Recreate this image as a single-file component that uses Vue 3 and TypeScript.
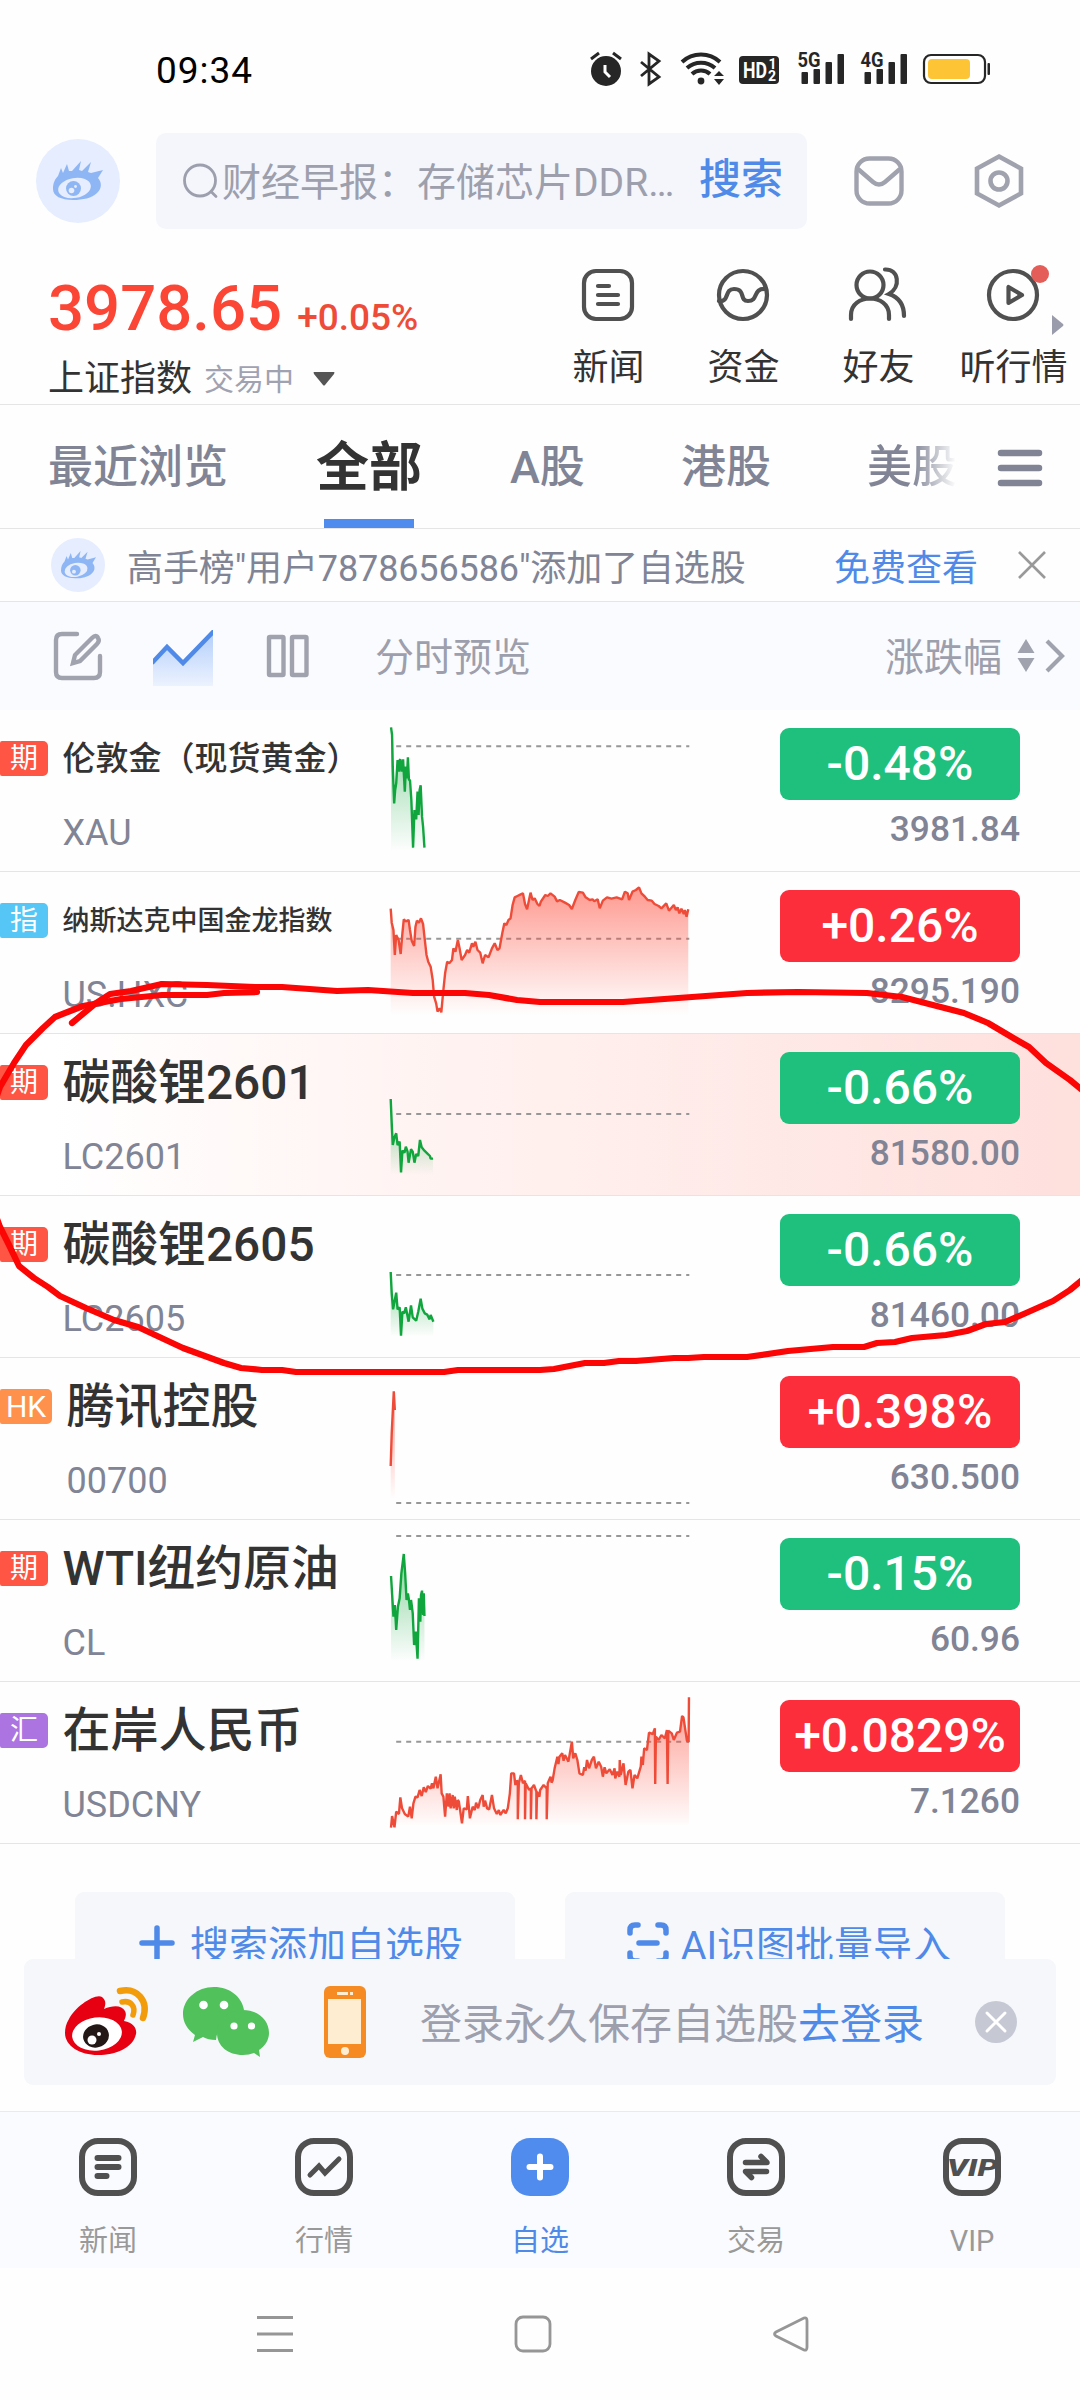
<script setup lang="ts">
interface Quote {
  tag: string
  tagColor: string
  name: string
  size: number
  code: string
  change: string
  price: string
  up: boolean
  hot?: boolean
  top: number
  base: number
  floor: number
  line: string
}

const quotes: Quote[] = [
  {
    tag: '期', tagColor: '#fe5544', name: '伦敦金（现货黄金）', size: 33, code: 'XAU',
    change: '-0.48%', price: '3981.84', up: false, top: 30, base: 139, floor: 455,
    line: '1135,82 1138,105 1140,200 1144,310 1147,270 1150,250 1154,180 1158,215 1160,180 1162,178 1166,215 1170,178 1175,275 1178,200 1181,235 1184,172 1187,240 1190,240 1194,300 1199,443 1203,330 1208,358 1212,275 1215,345 1218,270 1221,256 1225,350 1228,380 1232,443',
  },
  {
    tag: '指', tagColor: '#55c6f6', name: '纳斯达克中国金龙指数', size: 27, code: 'US.HXC',
    change: '+0.26%', price: '8295.190', up: true, top: 516, base: 716, floor: 945,
    line: '1134,626 1137,668 1142,690 1146,765 1150,705 1157,720 1163,762 1168,700 1172,658 1178,664 1186,660 1190,690 1195,722 1202,738 1206,680 1210,662 1216,668 1222,655 1228,672 1232,710 1238,765 1243,785 1250,800 1256,840 1260,890 1266,910 1270,935 1276,925 1281,937 1286,880 1292,820 1298,785 1304,790 1312,780 1316,745 1322,755 1329,720 1334,745 1340,780 1350,765 1356,750 1362,758 1370,730 1374,740 1380,725 1386,750 1394,758 1401,790 1408,765 1418,772 1428,745 1436,730 1444,750 1450,745 1458,700 1464,670 1470,675 1476,660 1482,655 1488,615 1494,592 1502,588 1510,584 1518,580 1524,612 1530,628 1540,578 1546,600 1552,595 1560,612 1566,618 1570,605 1583,585 1590,588 1598,580 1610,590 1617,604 1625,600 1640,608 1652,615 1660,627 1670,600 1680,576 1692,578 1700,592 1712,600 1720,598 1725,604 1735,598 1741,625 1750,602 1762,592 1775,596 1790,592 1806,598 1814,575 1822,580 1826,600 1836,575 1846,570 1855,562 1862,580 1872,590 1880,600 1892,602 1900,612 1912,618 1920,625 1934,610 1942,632 1956,615 1962,630 1967,622 1972,640 1978,626 1985,642 1988,630 1993,650 1998,628',
  },
  {
    tag: '期', tagColor: '#fe5544', name: '碳酸锂2601', size: 47.8, code: 'LC2601',
    change: '-0.66%', price: '81580.00', up: false, hot: true, top: 12, base: 252, floor: 435,
    line: '1134,207 1137,280 1140,345 1145,322 1150,310 1154,345 1160,335 1164,427 1168,362 1174,368 1178,350 1183,365 1186,398 1193,358 1198,365 1203,398 1208,372 1214,378 1219,330 1224,352 1232,362 1240,370 1248,378 1250,386 1257,386',
  },
  {
    tag: '期', tagColor: '#fe5544', name: '碳酸锂2605', size: 47.8, code: 'LC2605',
    change: '-0.66%', price: '81460.00', up: false, top: 498, base: 735, floor: 920,
    line: '1134,726 1137,790 1141,838 1150,788 1154,838 1160,832 1164,917 1168,845 1173,850 1178,832 1186,875 1193,826 1198,862 1208,872 1214,845 1221,806 1226,836 1233,850 1240,854 1247,868 1250,855 1258,875',
  },
  {
    tag: 'HK', tagColor: '#ff914d', name: '腾讯控股', size: 48, code: '00700',
    change: '+0.398%', price: '630.500', up: true, top: -6, base: 429, floor: 415,
    line: '1134,318 1137,220 1143,94 1146,150',
  },
  {
    tag: '期', tagColor: '#fe5544', name: 'WTI纽约原油', size: 47.8, code: 'CL',
    change: '-0.15%', price: '60.96', up: false, top: 480, base: 528, floor: 905,
    line: '1135,648 1138,700 1142,770 1146,735 1150,810 1155,740 1160,715 1165,640 1172,582 1176,640 1180,720 1184,700 1187,720 1190,750 1193,720 1195,735 1198,760 1202,855 1207,815 1209,850 1212,896 1216,715 1220,785 1222,705 1225,692 1228,765 1230,700 1232,768',
  },
  {
    tag: '汇', tagColor: '#ab74e0', name: '在岸人民币', size: 48, code: 'USDCNY',
    change: '+0.0829%', price: '7.1260', up: true, top: 966, base: 1145, floor: 1395,
    line: '1135,1403 1138,1368 1145,1402 1150,1355 1158,1362 1162,1312 1167,1345 1175,1362 1185,1370 1190,1340 1195,1375 1200,1330 1206,1310 1212,1312 1218,1290 1224,1308 1230,1282 1236,1296 1242,1278 1250,1286 1254,1270 1258,1285 1265,1250 1270,1285 1279,1243 1282,1300 1287,1310 1292,1370 1297,1300 1302,1340 1305,1300 1308,1345 1314,1305 1317,1345 1320,1310 1326,1350 1329,1320 1332,1325 1341,1390 1346,1345 1355,1348 1358,1308 1364,1375 1372,1340 1378,1350 1382,1328 1388,1345 1394,1320 1401,1305 1404,1340 1408,1322 1414,1345 1420,1348 1428,1305 1434,1345 1442,1362 1448,1350 1452,1365 1462,1350 1468,1360 1474,1345 1480,1300 1484,1240 1492,1240 1496,1275 1500,1262 1503,1265 1503,1378 1506,1270 1512,1245 1518,1270 1524,1262 1524,1378 1526,1270 1536,1290 1541,1285 1541,1378 1543,1285 1550,1275 1557,1295 1557,1378 1559,1295 1566,1310 1568,1290 1578,1275 1587,1285 1587,1378 1590,1270 1598,1250 1601,1268 1604,1262 1610,1225 1618,1190 1621,1212 1624,1190 1632,1180 1636,1202 1640,1185 1650,1205 1660,1145 1664,1195 1670,1180 1676,1200 1682,1240 1692,1245 1696,1222 1700,1232 1704,1200 1710,1225 1718,1200 1724,1190 1730,1225 1738,1205 1745,1220 1750,1250 1755,1222 1760,1240 1770,1228 1778,1245 1784,1225 1786,1255 1792,1235 1798,1250 1799,1200 1802,1245 1810,1210 1816,1275 1824,1235 1830,1230 1836,1285 1842,1245 1850,1255 1860,1220 1862,1190 1866,1215 1870,1165 1878,1170 1884,1118 1895,1122 1901,1105 1902,1272 1904,1130 1912,1140 1920,1125 1930,1135 1936,1110 1938,1272 1940,1112 1950,1120 1956,1140 1965,1118 1974,1115 1980,1068 1984,1072 1988,1100 1994,1142 1999,1145 2000,1012',
  },
]

const area = (q: Quote): string => {
  const pts = q.line.split(' ')
  const first = pts[0].split(',')[0]
  const last = pts[pts.length - 1].split(',')[0]
  return `${first},${q.floor} ${q.line} ${last},${q.floor}`
}
</script>

<template>
  <div class="screen">
    <header class="status">
      <span class="clock">09:34</span>
      <svg class="status-icons" viewBox="588 48 406 40" width="406" height="40">
        <g fill="#262626">
          <circle cx="606" cy="71" r="15" />
          <path d="M591 59l8-6M621 59l-8-6" stroke="#262626" stroke-width="3" />
          <path d="M605 65v7l5 5" fill="none" stroke="#fff" stroke-width="3" />
          <path d="M641 62l18 15-10 7V54l10 7-18 15" fill="none" stroke="#262626" stroke-width="2.8" />
          <path d="M682 62a28 28 0 0 1 38 0M687 68a21 21 0 0 1 28 0M692 74a13 13 0 0 1 18 0" fill="none" stroke="#262626" stroke-width="4" />
          <circle cx="701" cy="81" r="3.4" />
          <path d="M714 76l5-5 5 5zM714 79h10l-5 6z" />
          <rect x="739" y="56" width="40" height="28" rx="4" />
          <rect x="801.500" y="72" width="6.500" height="12" rx="1" /><rect x="813.500" y="69" width="6.500" height="15" rx="1" />
          <rect x="825.500" y="62" width="6.500" height="22" rx="1" /><rect x="837.500" y="54" width="6.500" height="30" rx="1" />
          <rect x="864.500" y="72" width="6.500" height="12" rx="1" /><rect x="876.500" y="69" width="6.500" height="15" rx="1" />
          <rect x="888.500" y="62" width="6.500" height="22" rx="1" /><rect x="900.500" y="54" width="6.500" height="30" rx="1" />
          <rect x="987.500" y="63" width="2.500" height="12" rx="1" />
        </g>
        <rect x="924" y="55" width="61" height="28" rx="7" fill="#fff" stroke="#262626" stroke-width="2.200" />
        <rect x="928" y="59" width="42" height="20" rx="4" fill="#fdc536" />
        <g font-family="Roboto, sans-serif" font-weight="700">
          <text x="743" y="77.500" font-size="22" textLength="24" lengthAdjust="spacingAndGlyphs" fill="#fff">HD</text>
          <text x="768.500" y="69" font-size="14" fill="#fff">1</text>
          <text x="768" y="81" font-size="14" fill="#fff">2</text>
          <text x="797.500" y="66.500" font-size="20" textLength="23" lengthAdjust="spacingAndGlyphs" fill="#262626">5G</text>
          <text x="860.500" y="66.500" font-size="20" textLength="23" lengthAdjust="spacingAndGlyphs" fill="#262626">4G</text>
        </g>
      </svg>
    </header>

    <div class="search-row">
      <div class="avatar">
        <svg viewBox="0 0 50 40" width="50" height="40">
          <path d="M0 28C0 22 2 18 5 15L8 7 10 12 14 3 16 10 19 10 28 0 26 9 29 10 38 1 35 11 38 12 50 9 45 17C49 21 49 28 44 32C39 37 30 39 20 39C8 39 0 35 0 28z" fill="#8fb6f4" />
          <ellipse cx="21.500" cy="27" rx="16.500" ry="10" transform="rotate(-10 21.500 27)" fill="#e5edfe" />
          <ellipse cx="20.500" cy="27.500" rx="7.500" ry="7.500" fill="#8fb6f4" />
          <circle cx="18.500" cy="29.500" r="2.800" fill="#e5edfe" /><circle cx="22.500" cy="25.500" r="1.400" fill="#e5edfe" />
        </svg>
      </div>
      <div class="search">
        <svg viewBox="0 0 38 38" width="38" height="38" fill="none" stroke="#9d9fad" stroke-width="2.800" stroke-linecap="round">
          <circle cx="18" cy="18.500" r="15.500" /><path d="M29 29.500l5 5" />
        </svg>
        <span class="query">财经早报：存储芯片DDR…</span>
        <span class="go">搜索</span>
      </div>
      <svg class="mail" viewBox="0 0 50 50" width="50" height="50" fill="none" stroke="#a0a2ae" stroke-width="4.400">
        <rect x="2.500" y="2.500" width="45" height="45" rx="13" />
        <path d="M4 13l15 13q6 5 12 0L46 13" />
      </svg>
      <svg class="gear" viewBox="0 0 50 56" width="50" height="56" fill="none" stroke="#a0a2ae" stroke-width="4.600">
        <path d="M25 3.500L47 15.500V40.500L25 52.500 3 40.500V15.500z" /><circle cx="25" cy="28" r="8.500" />
      </svg>
    </div>

    <section class="index-row">
      <div class="index">
        <div class="index-value"><b>3978.65</b><em>+0.05%</em></div>
        <div class="index-name">
          <span>上证指数</span><small>交易中</small>
          <svg viewBox="0 0 22 14" width="22" height="14"><path d="M1 0h20q1 0 0 2L12 13q-1 1-2 0L1 2q-1-2 0-2z" fill="#555" /></svg>
        </div>
      </div>
      <nav class="shortcuts">
        <div class="shortcut">
          <svg viewBox="0 0 60 60" width="60" height="60">
            <rect x="6" y="6" width="48" height="48" rx="12" /><path d="M20 21h11M20 30h20M20 39h20" />
          </svg>
          <span>新闻</span>
        </div>
        <div class="shortcut">
          <svg viewBox="0 0 60 60" width="60" height="60">
            <circle cx="30" cy="30" r="24" /><path d="M6 36c11 1 5-12 15-12 12 0 5 12 14 12 11 0 4-13 18-12" />
          </svg>
          <span>资金</span>
        </div>
        <div class="shortcut">
          <svg viewBox="1 0 60 60" width="60" height="60">
            <circle cx="23" cy="20" r="13.500" /><path d="M4 54V50C4 28 42 28 42 50v4M38 4.500C52 4 54 22 42 29 51 32 57 39 57 51" />
          </svg>
          <span>好友</span>
        </div>
        <div class="shortcut">
          <svg viewBox="0 0 60 60" width="60" height="60">
            <circle cx="30" cy="30" r="24" /><path d="M25.500 22v16L39 30z" stroke-linejoin="round" />
          </svg>
          <i class="dot"></i>
          <span>听行情</span>
        </div>
        <svg class="more" viewBox="0 0 13 22" width="13" height="22"><path d="M1 1l11 9q1 1 0 2L1 21z" fill="#9a9cac" /></svg>
      </nav>
    </section>

    <nav class="tabs">
      <span class="tab t1">最近浏览</span>
      <span class="tab t2">全部</span>
      <span class="tab t3">A股</span>
      <span class="tab t4">港股</span>
      <span class="tab t5">美股</span>
      <svg class="menu" viewBox="0 0 46 36" width="46" height="36" stroke="#808495" stroke-width="6.500" stroke-linecap="round"><path d="M4 3h38M4 18h38M4 33h38" /></svg>
    </nav>

    <section class="notice">
      <div class="avatar small">
        <svg viewBox="0 0 50 40" width="35" height="28">
          <path d="M0 28C0 22 2 18 5 15L8 7 10 12 14 3 16 10 19 10 28 0 26 9 29 10 38 1 35 11 38 12 50 9 45 17C49 21 49 28 44 32C39 37 30 39 20 39C8 39 0 35 0 28z" fill="#8fb6f4" />
          <ellipse cx="21.500" cy="27" rx="16.500" ry="10" transform="rotate(-10 21.500 27)" fill="#e5edfe" />
          <ellipse cx="20.500" cy="27.500" rx="7.500" ry="7.500" fill="#8fb6f4" />
          <circle cx="18.500" cy="29.500" r="2.800" fill="#e5edfe" />
        </svg>
      </div>
      <span class="notice-text">高手榜"用户7878656586"添加了自选股</span>
      <span class="link">免费查看</span>
      <svg viewBox="0 0 28 28" width="28" height="28" stroke="#999" stroke-width="2.600"><path d="M1 1l26 26M27 1L1 27" /></svg>
    </section>

    <section class="tools">
      <svg class="tool-edit" viewBox="0 0 50 50" width="50" height="50" fill="none" stroke="#a0a2ae" stroke-width="4.400" stroke-linecap="round">
        <path d="M24 3H9q-6 0-6 6v32q0 6 6 6h32q6 0 6-6V25" /><path d="M39 7q4-4 6 0 2 3-1 6L27 30l-7 2 2-8z" />
      </svg>
      <svg class="tool-line" viewBox="0 0 60 56" width="60" height="56">
        <defs><linearGradient id="toolFill" x1="0" y1="0" x2="0" y2="1"><stop offset="0" stop-color="#b3cffb" /><stop offset="1" stop-color="#ecf2fe" /></linearGradient></defs>
        <path d="M0 32L14 17 30 33 60 2V56H0z" fill="url(#toolFill)" /><path d="M-1 33L14 17 30 33 61 1" fill="none" stroke="#4f8ae8" stroke-width="4.400" />
      </svg>
      <svg class="tool-cols" viewBox="0 0 44 44" width="44" height="44" fill="none" stroke="#a0a2ae" stroke-width="4.400">
        <rect x="3" y="3" width="14.500" height="38" rx="1" /><rect x="26" y="3" width="14.500" height="38" rx="1" />
      </svg>
      <span class="preview">分时预览</span>
      <span class="sort">涨跌幅</span>
      <svg viewBox="0 0 48 36" width="48" height="36">
        <path d="M8 1l8.500 14h-17zM8 34l8.500-14h-17z" fill="#a0a2ae" /><path d="M29 3l15 15-15 15" fill="none" stroke="#a0a2ae" stroke-width="4.200" />
      </svg>
    </section>

    <main class="list">
      <svg width="0" height="0" class="defs">
        <defs>
          <linearGradient id="upFill" x1="0" y1="0" x2="0" y2="1"><stop offset="0" stop-color="#ff4b3a" stop-opacity=".56" /><stop offset="1" stop-color="#ff4b3a" stop-opacity="0" /></linearGradient>
          <linearGradient id="downFill" x1="0" y1="0" x2="0" y2="1"><stop offset="0" stop-color="#0fa83c" stop-opacity=".5" /><stop offset="1" stop-color="#0fa83c" stop-opacity="0" /></linearGradient>
        </defs>
      </svg>
      <article v-for="q in quotes" :key="q.code" class="row" :class="{ hot: q.hot }">
        <div class="tag" :class="{ wide: q.tag.length > 1 }" :style="{ background: q.tagColor }">{{ q.tag }}</div>
        <div class="names">
          <div class="name" :style="{ fontSize: q.size + 'px' }">{{ q.name }}</div>
          <div class="code">{{ q.code }}</div>
        </div>
        <svg class="chart" :viewBox="`1132 ${q.top} 871 486`" width="300" height="162" preserveAspectRatio="none">
          <line x1="1150" :y1="q.base" x2="2001" :y2="q.base" stroke="#979797" stroke-width="2" stroke-dasharray="5 5" vector-effect="non-scaling-stroke" />
          <polygon :points="area(q)" :fill="q.up ? 'url(#upFill)' : 'url(#downFill)'" />
          <polyline :points="q.line" fill="none" :stroke="q.up ? '#ee4c39' : '#10a63d'" stroke-width="2.400" stroke-linejoin="bevel" vector-effect="non-scaling-stroke" />
        </svg>
        <div class="figures">
          <div class="pill" :class="q.up ? 'up' : 'down'">{{ q.change }}</div>
          <div class="price">{{ q.price }}</div>
        </div>
      </article>
      <svg class="mark" viewBox="0 970 1080 420" width="1080" height="420" fill="none" stroke="#fb0505" stroke-width="6.200" stroke-linecap="round" stroke-linejoin="round">
        <path d="M257 992L224 993 207 995 162 995 121 999 83 1006 55 1017 43 1028 26 1045 14 1063 0 1087 -8 1110 -8 1205 0 1227 10 1247 19 1266 34 1278 48 1287 60 1296 86 1308 114 1320 138 1327 183 1348 224 1363 241 1368 262 1370 282 1370 296 1372 444 1372 458 1370 540 1370 554 1369 585 1363 604 1363 619 1361 636 1361 674 1358 688 1358 704 1357 747 1357 788 1351 833 1347 864 1347 877 1343 895 1342 912 1338 946 1335 967 1331 986 1324 1005 1322 1026 1313 1053 1301 1070 1290 1082 1280" />
        <path d="M1082 1090L1070 1080 1046 1063 1029 1047 1015 1039 988 1023 964 1013 929 1004 902 997 867 993 798 992 747 993 692 997 623 1002 540 1002 517 1000 489 995 465 993 413 993 368 990 337 991 282 987 255 987 207 985 162 984 131 991 110 994 96 1003 72 1023" />
      </svg>
    </main>

    <section class="adders">
      <div class="adder">
        <svg viewBox="0 0 38 38" width="38" height="38" stroke="#4f8ae8" stroke-width="5.500" stroke-linecap="round"><path d="M4 19h30M19 4v30" /></svg>
        <span class="a1">搜索添加自选股</span>
      </div>
      <div class="adder second">
        <svg viewBox="0 0 44 44" width="44" height="44" fill="none" stroke="#4f8ae8" stroke-width="5.500" stroke-linecap="round">
          <path d="M4 12V9q0-5 5-5h3M32 4h3q5 0 5 5v3M4 32v3q0 5 5 5h3M32 40h3q5 0 5-5v-3M13 22h18" />
        </svg>
        <span class="a2">AI识图批量导入</span>
      </div>
    </section>

    <section class="login">
      <svg class="weibo" viewBox="0 0 84 70" width="84" height="70">
        <path d="M5 32C11 20 31 6 38 10 42 13 42 17 40 22 49 18 58 18 61 24 63 28 61 31 60 34 70 36 73 42 72 47 69 61 52 68 34 68 16 68 1 59 1 46 1 41 2 37 5 32z" fill="#e60012" />
        <ellipse cx="33" cy="47" rx="25" ry="16.500" transform="rotate(-7 33 47)" fill="#fff" />
        <ellipse cx="32" cy="49" rx="13" ry="11.500" transform="rotate(-15 32 49)" fill="#231815" />
        <circle cx="28" cy="53" r="4.500" fill="#fff" /><circle cx="35" cy="47" r="2" fill="#fff" />
        <path d="M56 4C73 0 85 14 79 31" fill="none" stroke="#f39c0b" stroke-width="6.500" stroke-linecap="round" />
        <path d="M58 15C67 13 72 20 69 28" fill="none" stroke="#f39c0b" stroke-width="5.500" stroke-linecap="round" />
      </svg>
      <svg class="wechat" viewBox="0 0 88 72" width="88" height="72">
        <path d="M31 1C14 1 0 13 0 28 0 37 5 44 12 49L10 56 20 51Q25 54 33 54C34 40 45 28 61 24 59 11 47 1 31 1z" fill="#51c15b" />
        <path d="M60 24C45 24 34 34 34 47S45 69 60 69Q66 69 71 67L77 71 76 64C82 60 86 54 86 47 86 34 75 24 60 24z" fill="#51c15b" />
        <g fill="#fff"><circle cx="20.500" cy="19" r="4.300" /><circle cx="41" cy="19" r="4.300" /><circle cx="51" cy="40" r="3.600" /><circle cx="68.500" cy="40" r="3.600" /></g>
      </svg>
      <svg class="phone" viewBox="0 0 44 72" width="44" height="72">
        <rect x="1" width="42" height="72" rx="6" fill="#f68b24" /><rect x="5" y="13" width="33" height="45" fill="#feedd0" />
        <rect x="14" y="6" width="11" height="3" fill="#feedd0" /><rect x="27" y="6" width="3" height="3" fill="#feedd0" /><circle cx="22" cy="65" r="4" fill="#feedd0" />
      </svg>
      <span class="login-text">登录永久保存自选股<b>去登录</b></span>
      <svg class="close" viewBox="0 0 42 42" width="42" height="42"><circle cx="21" cy="21" r="21" fill="#c6c9d4" /><path d="M12 12l18 18M30 12L12 30" stroke="#fff" stroke-width="3" stroke-linecap="round" /></svg>
    </section>

    <nav class="tabbar">
      <div class="item">
        <svg viewBox="0 0 58 58" width="58" height="58"><rect x="3" y="3" width="52" height="52" rx="16" /><path d="M18.500 20h21M18.500 29h21M18.500 38h9" stroke-width="6" /></svg>
        <span>新闻</span>
      </div>
      <div class="item">
        <svg viewBox="0 0 58 58" width="58" height="58"><rect x="3" y="3" width="52" height="52" rx="16" /><path d="M15 37l9-9 6 7 14-14" stroke-width="5" /></svg>
        <span>行情</span>
      </div>
      <div class="item on">
        <svg viewBox="0 0 58 58" width="58" height="58"><rect width="58" height="58" rx="19" class="solid" /><path d="M18.500 29h21M29 18.500v21" class="plus" /></svg>
        <span>自选</span>
      </div>
      <div class="item">
        <svg viewBox="0 0 58 58" width="58" height="58"><rect x="3" y="3" width="52" height="52" rx="16" /><path d="M18.500 24.500H40l-6-6M39.500 33.500H18.500l6 6" stroke-width="5.500" stroke-linejoin="round" /></svg>
        <span>交易</span>
      </div>
      <div class="item">
        <svg viewBox="0 0 58 58" width="58" height="58"><rect x="3" y="3" width="52" height="52" rx="16" /><text x="4" y="38" class="vip" textLength="51" lengthAdjust="spacingAndGlyphs">VIP</text></svg>
        <span>VIP</span>
      </div>
    </nav>

    <footer class="sysnav">
      <svg viewBox="0 0 38 38" width="38" height="38"><path d="M1 2.500h36M1 19h36M1 35.500h36" /></svg>
      <svg viewBox="0 0 38 38" width="38" height="38"><rect x="2" y="2" width="34" height="34" rx="7" /></svg>
      <svg viewBox="-1 0 38 38" width="38" height="38"><path d="M32 3q3-1 3 3v26q0 4-3 3L4 21q-3-2 0-4z" /></svg>
    </footer>
  </div>
</template>

<style>
body { background: #fff; }
</style>

<style scoped>
.screen {
  width: 1080px; height: 2400px; overflow: hidden; background: #fefefe;
  font-family: Roboto, "Noto Sans CJK SC", sans-serif; color: #333; white-space: nowrap;
  display: flex; flex-direction: column;
}
svg { display: block; flex: none; overflow: visible; }
.status { height: 133px; flex: none; display: flex; align-items: flex-start; justify-content: space-between; padding: 48px 86px 0 156px; box-sizing: border-box; }
.clock { font-size: 37px; line-height: 45px; color: #000; letter-spacing: 1px; }
.search-row { height: 96px; flex: none; display: flex; align-items: center; padding-left: 36px; }
.avatar { width: 84px; height: 84px; border-radius: 50%; background: #e5edfe; display: flex; align-items: center; justify-content: center; flex: none; }
.avatar.small { width: 54px; height: 54px; }
.search { width: 651px; height: 96px; margin-left: 36px; background: #f4f6fc; border-radius: 10px; display: flex; align-items: center; box-sizing: border-box; padding: 0 24px 0 26px; }
.query { font-size: 39px; line-height: 92px; padding-top: 4px; color: #9d9fad; margin-left: 2px; }
.go { margin-left: auto; font-size: 42px; line-height: 50px; padding-bottom: 2px; font-weight: 500; color: #4f8ae8; }
.mail { margin-left: 47px; }
.gear { margin-left: 70px; }
.index-row { height: 176px; flex: none; box-sizing: border-box; border-bottom: 1px solid #e5e5e5; display: flex; justify-content: space-between; }
.index { padding: 44px 0 0 48px; }
.index-value { display: flex; align-items: baseline; line-height: 72px; height: 72px; color: #fb4636; }
.index-value b { font-size: 63.5px; font-weight: 500; }
.index-value em { font-size: 37px; font-style: normal; font-weight: 500; margin-left: 15px; color: #ee4c39; }
.index-name { display: flex; align-items: center; font-size: 36px; line-height: 42px; margin-top: 11px; }
.index-name small { font-size: 30px; color: #a0a2b2; margin: 3px 19px 0 12px; }
.shortcuts { width: 540px; display: flex; position: relative; }
.shortcut { width: 135px; flex: none; display: flex; flex-direction: column; align-items: center; position: relative; padding-top: 36px; }
.shortcut svg { fill: none; stroke: #505050; stroke-width: 4.2; stroke-linecap: round; }
.shortcut span { font-size: 36px; line-height: 44px; margin: 21px -1px 0 1px; }
.dot { position: absolute; left: 86px; top: 36px; width: 18px; height: 18px; border-radius: 50%; background: #e55d58; }
.more { position: absolute; right: 16px; top: 85px; }
.tabs { height: 124px; flex: none; box-sizing: border-box; border-bottom: 1px solid #e5e5e5; display: flex; line-height: 126px; color: #808495; font-size: 45px; font-weight: 500; padding-left: 48px; }
.t1 { width: 268px; }
.t2 { width: 106px; font-size: 53px; font-weight: 700; color: #333; position: relative; }
.t2::after { content: ""; position: absolute; left: 8px; top: 114px; width: 90px; height: 9px; background: #508cee; }
.t3 { width: 171px; margin-left: 88px; }
.t4 { width: 186px; }
.t5 { width: 90px; height: 123px; background: linear-gradient(90deg, #808495 50%, #fff 100%); -webkit-background-clip: text; background-clip: text; color: transparent; }
.menu { margin: 45px 0 0 40px; }
.notice { height: 73px; flex: none; box-sizing: border-box; border-bottom: 1px solid #e5e5e5; display: flex; align-items: center; padding: 0 34px 0 51px; font-size: 36px; color: #808495; }
.notice-text { margin-left: 22px; letter-spacing: -.12px; }
.link { margin-left: auto; color: #4f8ae8; padding-right: 40px; }
.tools { height: 108px; flex: none; background: #fafbfe; display: flex; align-items: center; padding: 0 14px 0 53px; font-size: 39px; color: #9d9fad; box-sizing: border-box; }
.tool-line { margin-left: 50px; overflow: hidden; margin-top: 4px; }
.tool-cols { margin-left: 53px; }
.preview { margin-left: 65px; padding-bottom: 5px; }
.sort { margin-left: auto; padding-right: 16px; padding-bottom: 5px; }
.list { position: relative; flex: none; }
.defs { position: absolute; }
.row { height: 162px; box-sizing: border-box; border-bottom: 1px solid #e5e5e5; display: flex; }
.row.hot { background: linear-gradient(90deg, #fff 5%, #fff0ee 50%, #fee0dd 100%); }
.tag { width: 48px; height: 35px; margin-top: 31px; border-radius: 2px 5px 5px 2px; color: #fff; font-size: 28px; line-height: 36px; text-align: center; box-sizing: border-box; flex: none; }
.tag.wide { width: 52px; font-size: 30px; }
.names { margin-left: 14.5px; width: 327.5px; }
.wide + .names { width: 323.5px; }
.name { height: 92px; line-height: 98px; font-weight: 500; }
.code { font-size: 36px; line-height: 42px; margin-top: 10px; color: #808495; }
.figures { margin-left: 90px; width: 240px; padding-top: 18px; }
.pill { height: 72px; border-radius: 9px; line-height: 72px; color: #fff; font-size: 48px; font-weight: 500; text-align: center; }
.pill.up { background: #fc2e3c; }
.pill.down { background: #1fc07d; }
.price { font-size: 35.3px; font-weight: 500; line-height: 42px; margin-top: 8px; text-align: right; color: #808495; }
.mark { position: absolute; left: 0; top: 260px; overflow: hidden; pointer-events: none; }
.adders { height: 115px; flex: none; overflow: hidden; display: flex; padding: 48px 75px 0; box-sizing: border-box; justify-content: space-between; align-items: flex-start; }
.adder { width: 440px; height: 102px; flex: none; background: #f6f7fb; border-radius: 9px; display: flex; align-items: center; box-sizing: border-box; padding-left: 63px; color: #4f8ae8; font-size: 39px; }
.adder.second { padding-left: 61px; }
.a1 { margin-left: 14px; padding-bottom: 2px; }
.a2 { margin-left: 11px; padding-bottom: 2px; }
.login { height: 126px; flex: none; margin: 0 24px; background: #f5f7fb; border-radius: 9px; display: flex; align-items: center; padding: 0 39px 0 40px; }
.wechat { margin-left: 35px; }
.phone { margin-left: 52px; }
.login-text { margin-left: 53px; padding-bottom: 3px; font-size: 42px; color: #9d9fad; }
.login-text b { font-weight: 400; color: #4f8ae8; }
.close { margin-left: auto; }
.tabbar { height: 157px; flex: none; margin-top: 26px; box-sizing: border-box; border-top: 1px solid #e6ebf2; background: #fafbfe; display: flex; }
.item { flex: 1; display: flex; flex-direction: column; align-items: center; padding-top: 26px; font-size: 29px; color: #999; }
.item svg { fill: none; stroke: #505050; stroke-width: 6; stroke-linecap: round; }
.item span { line-height: 36px; margin-top: 27px; }
.item.on span { color: #4f8ae8; }
.solid { fill: #508cee; stroke: none; }
.plus { stroke: #fff; }
.vip { font: italic 900 24px Roboto, sans-serif; fill: #505050; stroke: none !important; }
.sysnav { flex: 1; display: flex; justify-content: space-between; padding: 47px 271px 0 256px; }
.sysnav svg { fill: none; stroke: #969696; stroke-width: 2.8; }
</style>
